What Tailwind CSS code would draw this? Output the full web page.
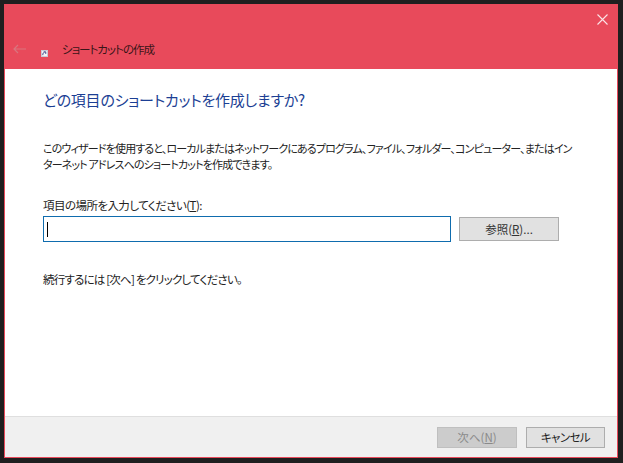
<!DOCTYPE html>
<html lang="ja">
<head>
    <meta charset="UTF-8">
    <title>ショートカットの作成</title>
    <script src="https://cdn.jsdelivr.net/npm/@tailwindcss/browser@4"></script>
</head>
<body class="bg-[#1f1f1f] overflow-hidden">
    <div class="w-[623px] h-[463px] pt-[4px] pl-[4px] pr-[5px] pb-[5px] font-['Noto_Sans_CJK_JP',sans-serif] [font-feature-settings:'palt'] text-[12px] text-[#222] leading-[16px]">
        <div class="h-full flex flex-col border-x border-b border-[#e84a5b]">
            <!-- title bar -->
            <header class="h-[65px] shrink-0 bg-[#e84a5b] flex flex-col">
                <div class="flex justify-end pt-[10px] pr-[9px] h-[31px]">
                    <svg width="11" height="11" viewBox="0 0 11 11" class="text-[#fbe4e7]"><path d="M0.5 0.5 L10.5 10.5 M10.5 0.5 L0.5 10.5" stroke="currentColor" stroke-width="1.1" fill="none"/></svg>
                </div>
                <div class="flex items-center h-[28px] pl-[8px]">
                    <svg width="14" height="10" viewBox="0 0 14 10" class="text-[#d9757f] shrink-0"><path d="M1 5 H13 M5 1 L1 5 L5 9" stroke="currentColor" stroke-width="1.2" fill="none"/></svg>
                    <div class="relative w-[7px] h-[7px] ml-[14px] mt-[9px] bg-[#f2f2f6] border border-[#c9c9d6] shrink-0">
                        <svg width="5" height="5" viewBox="0 0 6 6" class="absolute left-0 top-0"><path d="M1 5 V3 L3 1.5 M2 1 H4.5 V3.5" stroke="#24307a" stroke-width="1" fill="none"/></svg>
                    </div>
                    <span class="ml-[14px] text-[#3a1518] text-[11.5px] tracking-[-1px]">ショートカットの作成</span>
                </div>
            </header>
            <!-- content -->
            <main class="flex-1 bg-white pl-[38px] pr-[30px] pt-[19px]">
                <h1 class="text-[15px] leading-[24px] text-[#1c3f94] font-normal tracking-[-0.25px]">どの項目のショートカットを作成しますか?</h1>
                <p class="mt-[28px] leading-[16px] text-[11px] tracking-[-0.85px] w-[533px]">このウィザードを使用すると、ローカルまたはネットワークにあるプログラム、ファイル、フォルダー、コンピューター、またはインターネット アドレスへのショートカットを作成できます。</p>
                <label class="block mt-[25px] text-[11.5px] tracking-[-0.55px]">項目の場所を入力してください(<span class="underline">T</span>):</label>
                <div class="flex mt-[3px] items-center">
                    <div class="w-[408px] h-[26px] border border-[#0f6cae] flex items-center pl-[3px]">
                        <div class="w-px h-[15px] bg-black"></div>
                    </div>
                    <button class="ml-[8px] w-[100px] h-[24px] bg-[#e1e1e1] border border-[#adadad] text-[11.5px] text-[#333]">参照(<span class="underline">R</span>)...</button>
                </div>
                <p class="mt-[29px] text-[11.5px] tracking-[-0.8px]">続行するには [次へ] をクリックしてください。</p>
            </main>
            <!-- footer -->
            <footer class="h-[41px] shrink-0 bg-[#f0f0f0] border-t border-[#dfdfdf] flex justify-end items-center gap-[9px] pr-[12px]">
                <button disabled class="w-[80px] h-[21px] bg-[#cccccc] border border-[#bfbfbf] text-[11.5px] text-[#8a8a8a]">次へ(<span class="underline">N</span>)</button>
                <button class="w-[79px] h-[21px] bg-[#e1e1e1] border border-[#adadad] text-[11.5px] tracking-[-0.6px] text-[#222]">キャンセル</button>
            </footer>
        </div>
    </div>
</body>
</html>
